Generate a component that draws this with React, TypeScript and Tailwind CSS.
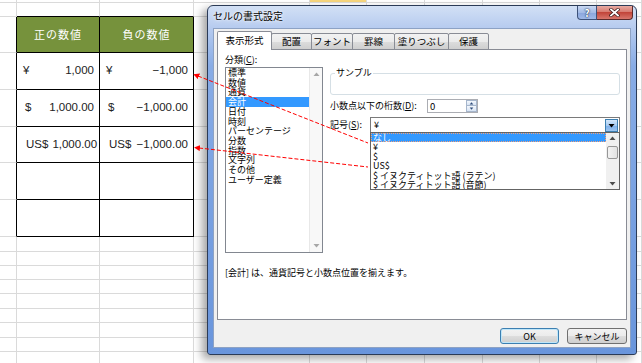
import React from 'react';

const COLS = ['w-[17px]', 'w-[83px]', 'w-[94px]', 'w-[116px]', 'w-[57px]', 'w-[58px]', 'w-[58px]', 'w-[57px]', 'w-[57px]', 'w-[45px]'];
const ROWS = ['h-[3px]', 'h-[14px]', 'h-[36px]', 'h-[37px]', 'h-[37px]', 'h-[36px]', 'h-[37px]', 'h-[37px]', 'h-[15px]', 'h-[14px]', 'h-[14px]', 'h-[14px]', 'h-[15px]', 'h-[14px]', 'h-[15px]', 'h-[14px]', 'h-[14px]'];

// 表のセル (行 3〜5)
const values: Record<number, { cur: string; val: string; pl: string }[]> = {
  3: [
    { cur: '¥', val: '1,000', pl: 'pl-[6px]' },
    { cur: '¥', val: '−1,000', pl: 'pl-[6px]' },
  ],
  4: [
    { cur: '$', val: '1,000.00', pl: 'pl-[8px]' },
    { cur: '$', val: '−1,000.00', pl: 'pl-[8px]' },
  ],
  5: [
    { cur: 'US$', val: '1,000.00', pl: 'pl-[9px]' },
    { cur: 'US$', val: '−1,000.00', pl: 'pl-[9px]' },
  ],
};

const categories = ['標準', '数値', '通貨', '会計', '日付', '時刻', 'パーセンテージ', '分数', '指数', '文字列', 'その他', 'ユーザー定義'];
const symbols = ['なし', '¥', '$', 'US$', '$ イヌクティトット語 (ラテン)', '$ イヌクティトット語 (音節)'];
const tabs = [
  { label: '表示形式', w: 'w-[55px]' },
  { label: '配置', w: 'w-[41px]' },
  { label: 'フォント', w: 'w-[42px]' },
  { label: '罫線', w: 'w-[43px]' },
  { label: '塗りつぶし', w: 'w-[55px]' },
  { label: '保護', w: 'w-[41px]' },
];

function Tri({ down, color = '#4d4d4d', size = 5 }: { down?: boolean; color?: string; size?: number }) {
  return (
    <svg width={size + 2} height={size} viewBox="0 0 7 5">
      {down ? <path d="M0.5 1h6L3.5 4.5z" fill={color} /> : <path d="M0.5 4h6L3.5 0.5z" fill={color} />}
    </svg>
  );
}

function Sheet() {
  return (
    <div className="flex flex-col font-['Liberation_Sans','Noto_Sans_CJK_JP',sans-serif] text-[11.5px] text-[#222]">
      {ROWS.map((h, r) => (
        <div key={r} className={`flex ${h}`}>
          {COLS.map((w, c) => {
            const inTable = r >= 2 && r <= 7 && (c === 1 || c === 2);
            let cls = 'border-r border-b border-[#dadada]';
            if (inTable) cls = 'border-r border-b border-black';
            else if (c === 0 && r >= 2 && r <= 7) cls = 'border-r border-b border-[#dadada] border-r-black';
            else if (r === 1 && (c === 1 || c === 2)) cls = 'border-r border-b border-[#dadada] border-b-black';
            if (r === 0 && c === 4) cls += ' bg-[#f6d57c]';
            if (r === 2 && inTable) cls += ' bg-[#76923c]';
            const v = values[r]?.[c - 1];
            return (
              <div key={c} className={`${w} shrink-0 ${cls}`}>
                {r === 2 && inTable && (
                  <div className="flex h-full items-center justify-center font-['Noto_Sans_CJK_JP',sans-serif] text-[11px] tracking-[1px] text-white">
                    {c === 1 ? '正の数値' : '負の数値'}
                  </div>
                )}
                {v && (
                  <div className={`flex h-full items-center justify-between gap-[4px] ${v.pl} pr-[5px]`}>
                    <span>{v.cur}</span>
                    <span>{v.val}</span>
                  </div>
                )}
              </div>
            );
          })}
        </div>
      ))}
    </div>
  );
}

function Dialog() {
  return (
    <div className="absolute left-[207px] top-[5px] flex h-[350px] w-[430px] flex-col rounded-t-[6px] rounded-b-[3px] border border-[#2b3b57] bg-[linear-gradient(180deg,#d2e0f5_0px,#b6cbef_22px,#88ace6_60px,#6995dc_100%)] font-['Noto_Sans_CJK_JP',sans-serif] text-[9px] text-black shadow-[-5px_4px_8px_rgba(0,0,0,0.35)]">
      {/* タイトルバー */}
      <div className="flex h-[22px] shrink-0 items-start justify-between pl-[5px]">
        <span className="mt-[4px] text-[10px] leading-[12px] [text-shadow:0_0_5px_#fff,0_0_2px_#fff]">セルの書式設定</span>
        <div className="mr-[3px] flex">
          <div className="flex h-[14px] w-[20px] items-center justify-center rounded-bl-[4px] border border-t-0 border-[#3d5279] bg-[linear-gradient(180deg,#c9d8f2,#a3bbe6_50%,#8aa6dc_51%,#9fb9e8)] text-[10px] font-bold leading-none text-white [text-shadow:0_0_2px_#1c2d4f,0_0_1px_#1c2d4f]">
            ?
          </div>
          <div className="flex h-[14px] w-[36px] items-center justify-center rounded-br-[4px] border border-l-0 border-t-0 border-[#5a2a2a] bg-[linear-gradient(180deg,#e8aaa2,#d77b70_45%,#c2453a_50%,#d8766c)]">
            <svg width="11" height="9" viewBox="0 0 11 9">
              <path d="M2 1.5l7 6M9 1.5l-7 6" stroke="#3a1a1a" strokeWidth="3.2" strokeLinecap="square" />
              <path d="M2 1.5l7 6M9 1.5l-7 6" stroke="#fff" strokeWidth="1.8" strokeLinecap="square" />
            </svg>
          </div>
        </div>
      </div>

      {/* クライアント領域 */}
      <div className="mx-[5px] mb-[6px] flex flex-1 flex-col border border-[#8da2c4] bg-[#f0f0f0] pl-[3px] pr-[3px] pt-[2px]">
        {/* タブ */}
        <div className="relative z-10 -mb-px flex h-[19px] items-end">
          {tabs.map((t, i) =>
            i === 0 ? (
              <div key={t.label} className={`${t.w} flex h-[19px] items-center justify-center rounded-t-[2px] border border-b-0 border-[#898c95] bg-white text-[9.5px] leading-none`}>
                {t.label}
              </div>
            ) : (
              <div key={t.label} className={`${t.w} -ml-px flex h-[17px] items-center justify-center rounded-t-[2px] border border-[#898c95] bg-[linear-gradient(180deg,#f2f2f2,#ebebeb_50%,#dddddd_51%,#cfcfcf)] pt-[1px] text-[9.5px] leading-none`}>
                {t.label}
              </div>
            )
          )}
        </div>

        {/* タブパネル */}
        <div className="flex h-[271px] w-[410px] flex-col border border-[#898c95] bg-white pl-[7px] pt-[4px]">
          <div className="flex">
            {/* 分類 */}
            <div className="flex w-[98px] flex-col">
              <span className="leading-[12px]">
                分類(<span className="underline">C</span>):
              </span>
              <div className="mt-[1px] flex h-[186px] border border-[#828790]">
                <div className="flex flex-1 flex-col leading-[9.7px]">
                  {categories.map((c, i) => (
                    <div key={c} className={`pl-[2px] ${i === 3 ? 'bg-[#3399ff] text-white' : ''}`}>
                      {c}
                    </div>
                  ))}
                </div>
                <div className="flex w-[13px] flex-col items-center justify-between border-l border-[#e8e8e8] bg-[#f8f8f8] py-[4px]">
                  <Tri color="#a7a7a7" />
                  <Tri down color="#a7a7a7" />
                </div>
              </div>
            </div>

            {/* 右側 */}
            <div className="ml-[7px] flex w-[290px] flex-col pt-[19px]">
              <div className="relative h-[22px] rounded-[3px] border border-[#d5dfe5]">
                <span className="absolute -top-[7px] left-[4px] bg-white px-[1px] leading-[12px]">サンプル</span>
              </div>

              <div className="mt-[4px] flex h-[14px] items-center">
                <span className="w-[97px] leading-[12px]">
                  小数点以下の桁数(<span className="underline">D</span>):
                </span>
                <div className="flex h-[14px] w-[51px] border border-[#abadb3]">
                  <span className="flex-1 pl-[2px] text-[9.5px] leading-[12px]">0</span>
                  <div className="flex w-[11px] flex-col">
                    <div className="flex h-[6px] items-center justify-center border border-[#a6b6cc] bg-[linear-gradient(180deg,#f4f8fd,#d8e4f4)]">
                      <Tri color="#2c4a78" size={3} />
                    </div>
                    <div className="flex h-[6px] items-center justify-center border border-t-0 border-[#a6b6cc] bg-[linear-gradient(180deg,#f4f8fd,#d8e4f4)]">
                      <Tri down color="#2c4a78" size={3} />
                    </div>
                  </div>
                </div>
              </div>

              <div className="mt-[4px] flex h-[16px] items-center">
                <span className="w-[40px] leading-[12px]">
                  記号(<span className="underline">S</span>):
                </span>
                <div className="relative flex h-[16px] flex-1 items-center border border-[#7a7a7a] bg-white">
                  <span className="flex-1 pl-[3px] leading-[12px]">¥</span>
                  <div className="mr-px flex h-[13px] w-[13px] items-center justify-center border border-[#3c7fb1] bg-[linear-gradient(180deg,#d4e7fa,#a7cbf2_50%,#7fb0ea_51%,#9cc4f0)]">
                    <Tri down color="#000" />
                  </div>

                  {/* ドロップダウン */}
                  <div className="absolute left-[-1px] right-[-1px] top-full flex h-[58px] border border-[#646464] bg-white">
                    <div className="flex flex-1 flex-col overflow-hidden leading-[9.4px]">
                      {symbols.map((s, i) => (
                        <div
                          key={s}
                          className={`whitespace-nowrap pl-[2px] ${i === 0 ? 'bg-[#3399ff] text-white outline-1 outline-offset-[-1px] outline-dotted outline-[#f3a07a]' : ''}`}
                        >
                          {s}
                        </div>
                      ))}
                    </div>
                    <div className="flex w-[13px] flex-col items-center bg-[#f0f0f0] pb-[3px] pt-[3px]">
                      <Tri color="#4d4d4d" />
                      <div className="mt-[5px] h-[13px] w-[11px] rounded-[2px] border border-[#979797] bg-[linear-gradient(90deg,#f3f3f3,#e2e2e2)]" />
                      <div className="flex-1" />
                      <Tri down color="#4d4d4d" />
                    </div>
                  </div>
                </div>
              </div>
            </div>
          </div>

          <div className="mt-[14px] leading-[12px]">[会計] は、通貨記号と小数点位置を揃えます。</div>
        </div>

        {/* ボタン */}
        <div className="mt-[8px] flex justify-end gap-[8px]">
          <div className="flex h-[16px] w-[59px] items-center justify-center rounded-[3px] border border-[#3c7fb1] bg-[linear-gradient(180deg,#f2f2f2,#ebebeb_50%,#dddddd_51%,#cfcfcf)] shadow-[inset_0_0_0_1px_#bfe6f9] leading-none">
            OK
          </div>
          <div className="flex h-[16px] w-[60px] items-center justify-center rounded-[3px] border border-[#707070] bg-[linear-gradient(180deg,#f2f2f2,#ebebeb_50%,#dddddd_51%,#cfcfcf)] leading-none">
            キャンセル
          </div>
        </div>
      </div>
    </div>
  );
}

export default function App() {
  return (
    <div className="relative h-[363px] w-[642px] overflow-hidden bg-white">
      <Sheet />
      <Dialog />
      {/* 赤い破線の矢印 */}
      <svg className="pointer-events-none absolute inset-0 z-20" width="642" height="363">
        <defs>
          <marker id="ah" markerWidth="6" markerHeight="6" refX="1" refY="3" orient="auto-start-reverse">
            <path d="M0 0L6 3L0 6z" fill="#ff0000" />
          </marker>
        </defs>
        <line x1="198" y1="76" x2="368" y2="143" stroke="#ff0000" strokeWidth="1" strokeDasharray="4 2" markerStart="url(#ah)" />
        <line x1="199" y1="148" x2="368" y2="167" stroke="#ff0000" strokeWidth="1" strokeDasharray="4 2" markerStart="url(#ah)" />
      </svg>
    </div>
  );
}
